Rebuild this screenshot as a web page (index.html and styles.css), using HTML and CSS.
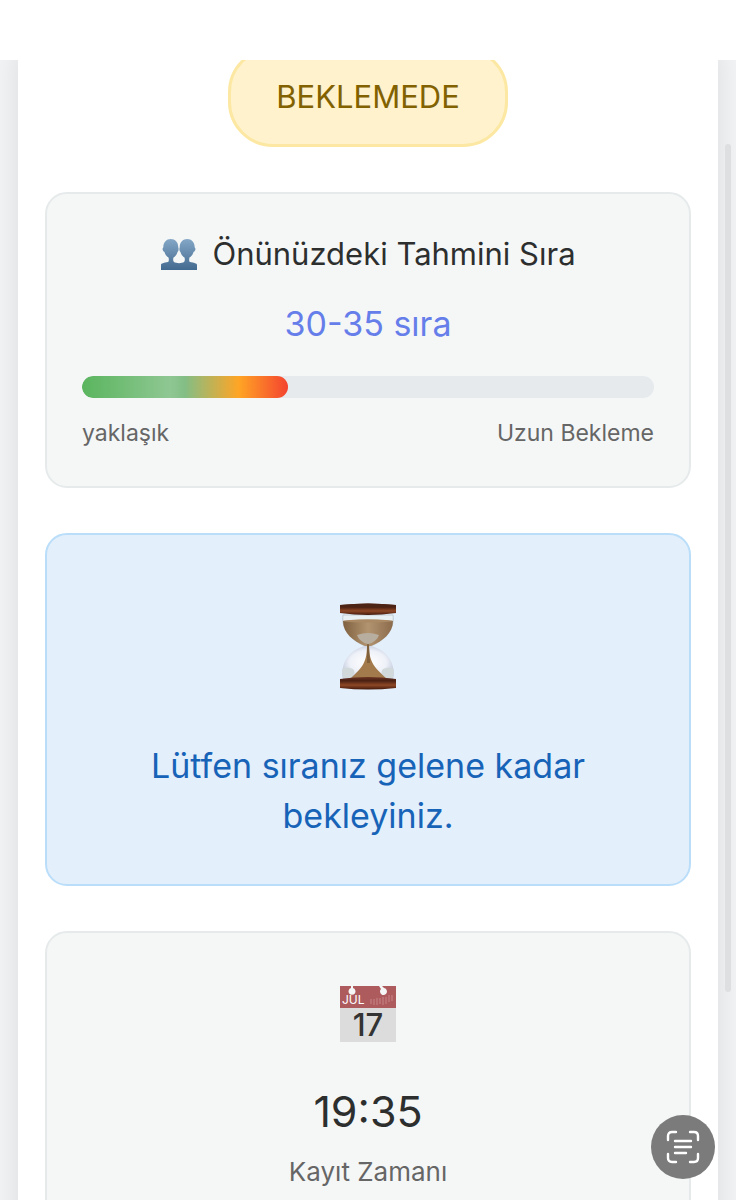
FILE: index.html
```
<!DOCTYPE html>
<html lang="tr">
<head>
    <meta charset="UTF-8">
    <meta name="viewport" content="width=device-width, initial-scale=1.0">
    <title>Sıra Takip</title>
    <link rel="stylesheet" href="styles.css">
</head>
<body>
    <header class="topbar"></header>

    <main class="container">
        <div class="status-badge">BEKLEMEDE</div>

        <!-- Tahmini sıra -->
        <section class="card queue-card">
            <h2 class="queue-title">
                <svg class="people-icon" viewBox="0 0 38 32" aria-hidden="true">
                    <defs>
                        <linearGradient id="people" x1="0" y1="0" x2="0" y2="32" gradientUnits="userSpaceOnUse">
                            <stop offset="0" stop-color="#86a9c8"/>
                            <stop offset="1" stop-color="#42698f"/>
                        </linearGradient>
                    </defs>
                    <path fill="url(#people)" d="M1 32v-5c0-2 3-2 7-3 1-.5 1-3 .5-4.500C6 18 5 16 4.500 14 2.500 13.500 2 10 3.300 9.500 3.300 4 6.500 1 10.800 1s7.500 3 7.500 8.500c.5.3.5 4-.8 4.500-.5 2-1.500 4-4 5.500-.5 1.500-.5 3.500.5 4.500 2 1.500 8 1.500 10 0 1-1 1-3 .5-4.500-2.500-1.500-3.500-3.500-4-5.500-1.300-.5-1.300-4.200-.8-4.500C19.700 4 22.900 1 27.200 1s7.500 3 7.500 8.500c1.300.5.8 4-1.200 4.500-.5 2-1.500 4-4 5.500-.5 1.500-.5 4 .5 4.500 4 1 7 1 7 3v5z"/>
                </svg>
                <span>Önünüzdeki Tahmini Sıra</span>
            </h2>
            <p class="queue-value">30-35 sıra</p>
            <div class="progress-bar">
                <div class="progress-fill" style="width: 36%"></div>
            </div>
            <div class="progress-labels">
                <span>yaklaşık</span>
                <span>Uzun Bekleme</span>
            </div>
        </section>

        <!-- Bekleme mesajı -->
        <section class="card message-card">
            <svg class="hourglass-icon" viewBox="0 0 60 88" aria-hidden="true">
                <defs>
                    <linearGradient id="wood" x1="0" y1="0" x2="0" y2="1">
                        <stop offset="0" stop-color="#6b3524"/>
                        <stop offset=".3" stop-color="#4a2012"/>
                        <stop offset=".65" stop-color="#8f4826"/>
                        <stop offset="1" stop-color="#42190c"/>
                    </linearGradient>
                    <linearGradient id="sand" x1="0" y1="0" x2="1" y2="0">
                        <stop offset="0" stop-color="#80613f"/>
                        <stop offset=".5" stop-color="#b39471"/>
                        <stop offset="1" stop-color="#8b6b4b"/>
                    </linearGradient>
                    <radialGradient id="glass" cx=".5" cy=".5" r=".6">
                        <stop offset="0" stop-color="#ffffff"/>
                        <stop offset=".6" stop-color="#eef1f8"/>
                        <stop offset="1" stop-color="#b6bfd6"/>
                    </radialGradient>
                </defs>
                <path fill="#e9f0f4" stroke="#c0cbd2" d="M5 12h50c2 14-8 25-22 31h-6C13 37 3 26 5 12z"/>
                <path fill="url(#sand)" d="M5 18q25-3 50 0c0 12-10 20-22 25h-6C15 38 5 30 5 18z"/>
                <ellipse cx="30" cy="18" rx="25" ry="1.500" fill="#aa8a65"/>
                <path fill="#b7aea0" d="M19 32q11-4 22 0c-2 5-6 8-11 9-5-1-9-4-11-9z"/>
                <path fill="url(#glass)" d="M27 43h6c16 4 25 17 22 33H5C2 60 11 47 27 43z"/>
                <path fill="#d2d9da" d="M4 66q5-3 11 0c3 3 0 7-2 9H5zM56 66q-5-3-11 0c-3 3 0 7 2 9h8z"/>
                <path fill="#a37a4c" d="M29 42h2c0 17 5 22 18 34H12c13-12 17-17 17-34z"/>
                <path fill="#60452b" d="M29 41h2l1 19h-3z" opacity=".5"/>
                <path fill="url(#wood)" d="M2 2q28-3 56 0v8q-28 4-56 0z"/>
                <path fill="#4b2416" d="M2 2q28-3 56 0v1q-28 3-56 0z"/>
                <path fill="url(#wood)" d="M2 76q28-4 56 0v9q-28 3-56 0z"/>
            </svg>
            <p class="message-text">Lütfen sıranız gelene kadar bekleyiniz.</p>
        </section>

        <!-- Kayıt zamanı -->
        <section class="card time-card">
            <svg class="calendar-icon" viewBox="0 0 56 56" aria-hidden="true">
                <path fill="#dcdcdc" d="M0 21h56v35H0z"/>
                <path fill="#ad5b5d" d="M0 0h56v22H0z"/>
                <path fill="#f5f7f7" d="M11 0h2v2a3.500 3.500 0 1 1-2 0zM39 0h3l2 2a3.500 3.500 0 1 1-3 1z"/>
                <path stroke="#c98789" stroke-width="1" fill="none" d="M31 18v-5m3 6v-6m3 6v-7m3 6v-6m3 7v-8m3 7v-7m3 5v-7m3 6v-6"/>
                <text x="2" y="18" class="calendar-month">JUL</text>
                <text x="28" y="50" text-anchor="middle" class="calendar-day">17</text>
            </svg>
            <p class="time-value">19:35</p>
            <p class="time-label">Kayıt Zamanı</p>
        </section>
    </main>

    <div class="scroll-thumb"></div>

    <button class="scan-button" type="button" aria-label="Metni tara">
        <svg viewBox="0 0 36 36" fill="none" stroke="#fff" stroke-width="2.400" stroke-linecap="round" stroke-linejoin="round" aria-hidden="true">
            <path d="M3 11V7q0-4 4-4h4M25 3h4q4 0 4 4v4M33 25v4q0 4-4 4h-4M11 33H7q-4 0-4-4v-4"/>
            <path d="M10 12h16M10 18h16M10 24h11"/>
        </svg>
    </button>
</body>
</html>
```
FILE: styles.css
```
* {
    margin: 0;
    padding: 0;
    box-sizing: border-box;
}

body {
    font-family: Inter, "Liberation Sans", sans-serif;
    font-weight: 400;
    color: #2d2f2f;
    background-color: #f3f4f6;
    height: 100vh;
    overflow: hidden;
}

/* Üst boşluk, kayan içeriğin üzerinde kalır */
.topbar {
    position: relative;
    z-index: 2;
    height: 60px;
    background-color: #fff;
}

.container {
    display: flex;
    flex-direction: column;
    gap: 45px;
    margin: -13px 18px 0;
    padding: 0 27px 45px;
    background-color: #fff;
    box-shadow: 0 0 30px rgba(0, 0, 0, 0.1);
}

.status-badge {
    align-self: center;
    padding: 27px 45px;
    border: 3px solid #fce8a2;
    border-radius: 45px;
    background-color: #fff2cd;
    color: #826200;
    font-size: 31px;
    line-height: 40px;
}

.card {
    border: 2px solid #e6eaeb;
    border-radius: 22px;
    background-color: #f5f7f7;
    text-align: center;
}

/* Sıra kartı */
.queue-card {
    padding: 36px 35px;
}

.queue-title {
    display: flex;
    align-items: center;
    justify-content: center;
    gap: 14px;
    font-size: 31px;
    font-weight: 400;
    line-height: 48px;
}

.people-icon {
    width: 38px;
    height: 32px;
}

.queue-value {
    margin: 18px 0 24px;
    color: #667eea;
    font-size: 34px;
    line-height: 56px;
}

.progress-bar {
    height: 22px;
    border-radius: 11px;
    background-color: #e7eaed;
    overflow: hidden;
}

.progress-fill {
    height: 100%;
    border-radius: 11px;
    background: linear-gradient(90deg, #5ab55e 0%, #8fc793 43%, #83be85 50%, #ffa525 76%, #f4432f 100%);
}

.progress-labels {
    display: flex;
    justify-content: space-between;
    margin-top: 18px;
    color: #666;
    font-size: 23px;
    line-height: 34px;
}

/* Mesaj kartı */
.message-card {
    padding: 68px 60px 43px;
    border-color: #badefa;
    background-color: #e3effb;
}

.hourglass-icon {
    display: block;
    width: 60px;
    height: 88px;
    margin: 0 auto 50px;
}

.message-text {
    color: #1763b8;
    font-size: 34px;
    line-height: 50px;
}

/* Zaman kartı */
.time-card {
    padding: 53px 35px 36px;
}

.calendar-icon {
    display: block;
    width: 56px;
    height: 56px;
    margin: 0 auto 36px;
    overflow: visible;
}

.calendar-month {
    fill: #fff;
    font-size: 12px;
}

.calendar-day {
    fill: #333;
    font-size: 31px;
    font-weight: 500;
}

.time-value {
    font-size: 43px;
    line-height: 66px;
}

.time-label {
    margin-top: 9px;
    color: #666;
    font-size: 26px;
    line-height: 38px;
}

.scroll-thumb {
    position: fixed;
    top: 12%;
    right: 5px;
    width: 6px;
    height: 848px;
    border-radius: 3px;
    background-color: #dedfe1;
}

.scan-button {
    position: fixed;
    right: 21px;
    bottom: 21px;
    display: flex;
    align-items: center;
    justify-content: center;
    width: 64px;
    height: 64px;
    border: none;
    border-radius: 50%;
    background-color: #7b7b7b;
    cursor: pointer;
}

.scan-button svg {
    width: 36px;
    height: 36px;
}
```
